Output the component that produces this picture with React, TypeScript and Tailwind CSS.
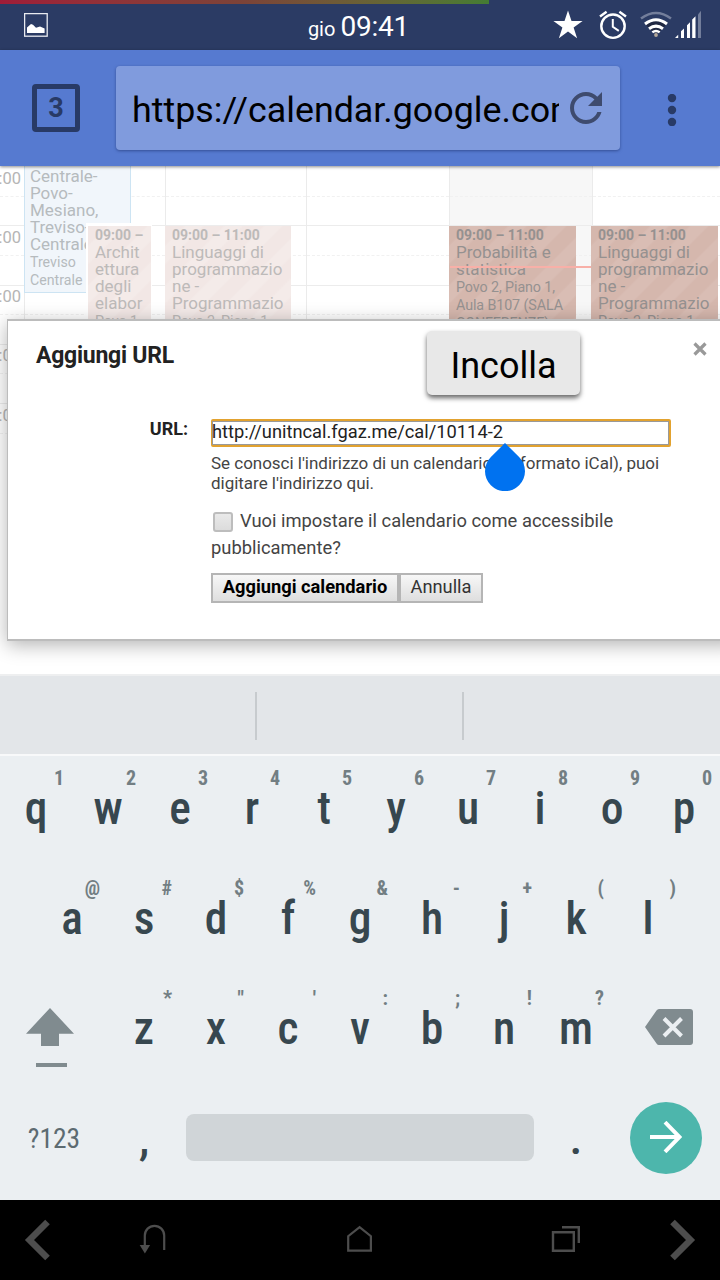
import type { ReactNode } from "react";

function StatusBar() {
  return (
    <header className="h-[50px] shrink-0 bg-[#2b3b64]">
      <div className="h-1 w-[489px] bg-linear-to-r from-[#a01c38] via-[#7c4338] to-[#447c33]" />
      <div className="grid h-[46px] grid-cols-[240px_1fr_240px] items-center text-white">
        <svg className="-mt-[4px] ml-6 h-6 w-6" viewBox="0 0 24 24">
          <rect x="0.6" y="0.6" width="22.6" height="22.6" fill="none" stroke="#e9ebf0" strokeWidth="1.3" />
          <path d="M3 20v-5.500l4-3.400 2 .6 3 3 4-1.3 4.6 2V20z" fill="#fff" />
        </svg>
        <div className="mt-[2px] flex items-baseline justify-center gap-[5px] pr-[3px] leading-8">
          <span className="text-[20px]">gio</span>
          <span className="text-[28px] tracking-[-0.2px]">09:41</span>
        </div>
        <svg className="h-[46px] w-60" viewBox="480 4 240 46">
          <path d="M568 10.5l3.5 10.6h11.1l-9 6.4 3.5 10.8-9.1-6.7-9.1 6.7 3.5-10.8-9-6.4h11.1z" fill="#fff" />
          <g fill="none" stroke="#fff">
            <circle cx="613" cy="26.2" r="11.7" strokeWidth="2.4" />
            <path d="M612.8 19v7.8l6 4" strokeWidth="2" />
            <path d="M600 16.5l6.6-4.8M626 16.5l-6.6-4.8" strokeWidth="2.4" />
          </g>
          <path d="M646 24.5q10-8 20 0l-3.5 4.5-6.5 5-6.5-5z" fill="#1b2032" opacity=".7" />
          <g fill="none" strokeWidth="2.5">
            <path d="M641 18.5q15-11 30 0" stroke="#737e9b" />
            <path d="M645 24q11-8.5 22 0" stroke="#fff" strokeWidth="3" />
            <path d="M649 28.8q7-5.3 14 0" stroke="#fff" strokeWidth="3" />
            <path d="M652.3 32.3q3.7-2.6 7.4 0" stroke="#fff" />
          </g>
          <circle cx="656" cy="35" r="1.9" fill="#b5a99b" />
          <path d="M675 38l3.2-3.3V38zM681 31.3l3-2.8V38h-3zM687 25.2l3-2.9V38h-3zM692.2 19.5l3.3-3.2V38h-3.3z" fill="#fff" />
          <path d="M698 14.5l3-3.8V38h-3z" fill="#737e9b" />
        </svg>
      </div>
    </header>
  );
}

function Toolbar() {
  return (
    <div className="relative z-10 flex h-[116px] shrink-0 items-center bg-[#567ad0] shadow-[0_1px_3px_rgba(0,0,0,0.45)]">
      <button className="ml-8 flex h-12 w-12 items-center justify-center rounded-[4px] border-[5px] border-[#283a66] text-[27px] font-bold text-[#283a66]">
        3
      </button>
      <div className="ml-9 flex h-[84px] w-[504px] items-center rounded-[4px] bg-[#809bdd] pl-4 shadow-[0_1px_3px_rgba(30,50,110,0.6)]">
        <div className="mt-[3px] w-[427px] overflow-hidden whitespace-nowrap text-[35.8px] leading-[46px] text-black">
          https://calendar.google.com
        </div>
        <svg className="ml-[11px] h-8 w-8 shrink-0" viewBox="4 4 16 16">
          <path d="M17.650 6.350C16.200 4.900 14.210 4 12 4c-4.420 0-7.990 3.580-7.990 8s3.570 8 7.990 8c3.730 0 6.840-2.550 7.730-6h-2.080c-.820 2.330-3.040 4-5.650 4-3.310 0-6-2.690-6-6s2.690-6 6-6c1.660 0 3.140.690 4.220 1.780L13 11h7V4l-2.350 2.350z" fill="#3e4b6e" />
        </svg>
      </div>
      <svg className="ml-[47px] mt-[3px] h-8 w-2.5" viewBox="0 0 10 32">
        <g fill="#283a66">
          <circle cx="5" cy="4" r="4.2" />
          <circle cx="5" cy="16" r="4.2" />
          <circle cx="5" cy="28" r="4.2" />
        </g>
      </svg>
    </div>
  );
}

type EventProps = { place: string; faded?: boolean; time: string; title: string; where: string };

function CalendarEvent({ place, faded, time, title, where }: EventProps) {
  const tone = faded
    ? "bg-[repeating-linear-gradient(135deg,#f2e7e5_0_13px,#f4ebe9_15px_26px,#f2e7e5_28px)] text-[#bdbab9]"
    : "bg-[repeating-linear-gradient(135deg,#d5b7ad_0_13px,#d9bdb4_15px_26px,#d5b7ad_28px)] text-[#959190]";
  return (
    <div className={`absolute top-[60px] h-[180px] overflow-hidden pl-[7px] pt-[1px] ${tone} ${place}`}>
      <div className="whitespace-nowrap text-[14px] font-bold leading-[17px] tracking-[-0.02px]">{time}</div>
      <div className="whitespace-pre text-[17px] leading-[17px]">{title}</div>
      <div className="whitespace-pre text-[14.3px] leading-[18px] tracking-[-0.1px]">{where}</div>
    </div>
  );
}

function HourCells() {
  return (
    <>
      {[0, 1, 2, 3, 4].map((n) => (
        <div key={n} className="h-[59.3px] border-b border-[#ececec]">
          <div className="h-[29.500px] border-b border-dashed border-[#f1f1f1]" />
        </div>
      ))}
    </>
  );
}

function DayColumn({ today, children }: { today?: boolean; children?: ReactNode }) {
  return (
    <div className={`relative border-l border-[#ebebeb] pt-px ${today ? "bg-[#f7f7f7]" : ""}`}>
      <HourCells />
      {children}
    </div>
  );
}

function Calendar() {
  return (
    <div className="grid h-full grid-cols-[24px_141px_141px_143px_143px_128px]">
      <div className="relative pt-px">
        <HourCells />
        <div className="absolute inset-0 flex flex-col items-end pr-[3px] pt-[1.5px] text-[16.5px] text-[#b5b5b5]">
          {["08:00", "09:00", "10:00", "11:00", "12:00"].map((t) => (
            <div key={t} className="h-[59.3px] leading-[21px]">{t}</div>
          ))}
        </div>
      </div>
      <DayColumn>
        <div className="absolute -left-px -top-1 h-[131px] w-[107px] whitespace-pre border border-[#cde4f3] bg-[#f1f6fb] pl-[5px] pt-[5px] text-[17px] leading-[17px] text-[#b6bbbe]">
          {"Centrale-\nPovo-\nMesiano,\nTreviso-\nCentrale"}
          <div className="text-[14.2px] leading-[18px]">{"Treviso\nCentrale"}</div>
        </div>
        <div className="absolute left-[61px] top-[57px] h-[190px] w-[66px] bg-white" />
        <CalendarEvent faded place="left-[63px] w-[63px]" time="09:00 –" title={"Archit\nettura\ndegli\nelabor"} where="Povo 1," />
      </DayColumn>
      <DayColumn>
        <CalendarEvent faded place="-left-px w-[126px]" time="09:00 – 11:00" title={"Linguaggi di\nprogrammazio\nne -\nProgrammazio"} where="Povo 2, Piano 1," />
      </DayColumn>
      <DayColumn />
      <DayColumn today>
        <CalendarEvent place="-left-px w-[127px]" time="09:00 – 11:00" title={"Probabilità e\nstatistica"} where={"Povo 2, Piano 1,\nAula B107 (SALA\nCONFERENZE),"} />
        <div className="absolute left-0 top-[100px] h-0.5 w-[142px] bg-[#f8b0a8]" />
      </DayColumn>
      <DayColumn>
        <CalendarEvent place="-left-[2px] w-[127px]" time="09:00 – 11:00" title={"Linguaggi di\nprogrammazio\nne -\nProgrammazio"} where="Povo 2, Piano 1," />
      </DayColumn>
    </div>
  );
}

function UrlDialog() {
  return (
    <section className="absolute left-[7px] top-[153px] h-[322px] w-[730px] border-2 border-l border-[#bcbcbc] bg-white pt-5 text-[#444] shadow-[0_4px_18px_rgba(0,0,0,0.3)]">
      <div className="flex items-start justify-between pl-7 pr-[28px]">
        <h1 className="pt-px text-[23px] font-bold leading-[28px] tracking-[-0.25px] text-[#222]">Aggiungi URL</h1>
        <svg className="mt-px h-3.5 w-3.5" viewBox="0 0 14 14">
          <path d="M1.500 1.500l11 11m0-11l-11 11" stroke="#999" strokeWidth="3.200" />
        </svg>
      </div>
      <div className="mt-[49px] flex">
        <label className="w-[180px] text-right text-[18px] font-bold leading-[20px] text-[#222]">URL:</label>
        <div className="ml-[23px] w-[462px]">
          <div className="h-7 w-[460px] rounded-[2px] border-2 border-[#e2a22f] bg-white">
            <div className="-ml-px h-6 border border-[#999] text-[18.3px] leading-[20px] text-[#222]">
              <span className="-ml-px">http://unitncal.fgaz.me/cal/10114-2</span>
            </div>
          </div>
          <p className="mt-[6px] whitespace-pre text-[17px] leading-[20px] tracking-[-0.02px]">{"Se conosci l'indirizzo di un calendario (in formato iCal), puoi\ndigitare l'indirizzo qui."}</p>
          <div className="mt-[14px] text-[18.35px] leading-[27px]">
            <div className="flex items-center">
              <span className="ml-[2px] mr-[7px] mt-[3px] h-5 w-5 rounded-[3px] border-2 border-[#bdbdbd] bg-linear-to-b from-[#e9e9e9] to-[#dcdcdc]" />
              <span className="whitespace-nowrap">Vuoi impostare il calendario come accessibile</span>
            </div>
            <div>pubblicamente?</div>
          </div>
          <div className="mt-[12px] flex text-[18.3px] leading-[24px]">
            <button className="h-[30px] w-[188px] whitespace-nowrap border-2 border-[#b5b5b5] bg-linear-to-b from-[#f7f7f7] to-[#dedede] pb-0.5 font-bold text-black">Aggiungi calendario</button>
            <button className="h-[30px] w-[84px] border-2 border-[#b5b5b5] bg-linear-to-b from-[#f7f7f7] to-[#dedede] pb-0.5 text-[#333]">Annulla</button>
          </div>
        </div>
      </div>
    </section>
  );
}

function Page() {
  return (
    <main className="relative h-[508px] shrink-0 overflow-hidden bg-white">
      <Calendar />
      <div className="absolute inset-x-0 bottom-0 h-[212px] bg-white" />
      <UrlDialog />
      <div className="absolute left-[427px] top-[165px] flex h-[64px] w-[153px] items-center justify-center rounded-[5px] bg-[#e8e8e8] pt-1.5 text-[36px] text-black shadow-[0_3px_5px_rgba(0,0,0,0.6)]">
        Incolla
      </div>
      <svg className="absolute left-[485px] top-[277px] h-12 w-10" viewBox="0 0 40 48">
        <path d="M20 0l14.100 14A20 20 0 1 1 5.900 14z" fill="#0072f0" />
      </svg>
    </main>
  );
}

function Key({ letter, hint }: { letter: string; hint?: string }) {
  return (
    <div className="h-[110px] w-[72px] pt-2.5">
      <div className="h-[25px] pr-2 text-right text-[20px] font-bold leading-6 text-[#727e83]">{hint}</div>
      <div className="text-center text-[45.5px] leading-[36px] font-[460] text-[#37474f]">{letter}</div>
    </div>
  );
}

function Keys({ letters, hints }: { letters: string; hints: string }) {
  return (
    <>
      {letters.split("").map((l, i) => (
        <Key key={l} letter={l} hint={hints[i]} />
      ))}
    </>
  );
}

function Keyboard() {
  return (
    <section className="h-[526px] shrink-0 bg-[#ebeff2] font-['Roboto_Condensed',Roboto,sans-serif] [font-stretch:75%]">
      <div className="flex h-[82px] items-center justify-center border-y-2 border-t-[#eeeff0] border-b-[#f8f9fa] bg-[#e3e6e9] pr-0.5">
        <div className="mt-0.5 h-12 w-0.5 bg-[#c7cbce]" />
        <div className="ml-[205px] mt-0.5 h-12 w-0.5 bg-[#c7cbce]" />
      </div>
      <div className="flex">
        <Keys letters="qwertyuiop" hints="1234567890" />
      </div>
      <div className="flex pl-9">
        <Keys letters="asdfghjkl" hints="@#$%&-+()" />
      </div>
      <div className="flex">
        <div className="w-[108px]">
          <svg className="ml-[26px] mt-[32px] h-[60px] w-12" viewBox="0 0 48 60">
            <path d="M24 0l24 25.700H33V38H15V25.700H0zM10 55h31v4H10z" fill="#808b8f" />
          </svg>
        </div>
        <Keys letters="zxcvbnm" hints={"*\"':;!?"} />
        <svg className="ml-[33px] mt-[33px] h-9 w-12" viewBox="0 0 48 36">
          <path d="M14 0h31a3 3 0 0 1 3 3v30a3 3 0 0 1-3 3H14q-1.500 0-2.500-1.500L0 18 11.500 1.500Q12.500 0 14 0z" fill="#808b8f" />
          <path d="M19 9.500l17.500 17.500m0-17.500L19 27" stroke="#ebeff2" strokeWidth="4" />
        </svg>
      </div>
      <div className="flex h-[114px] items-start">
        <div className="w-[108px] pt-[34px] text-center text-[27.5px] leading-[37px] text-[#5d6b71]">?123</div>
        <div className="w-[72px] pt-[34px] text-center text-[46px] font-medium leading-[37px] text-[#37474f]">,</div>
        <div className="ml-1.5 mt-[28px] h-[47px] w-[348px] rounded-lg bg-[#d0d5d8]" />
        <div className="ml-1.5 w-[72px] pt-[34px] text-center text-[46px] font-medium leading-[37px] text-[#37474f]">.</div>
        <div className="ml-[18px] mt-4 flex h-[72px] w-[72px] items-center justify-center rounded-full bg-[#4db6ac]">
          <svg className="-mt-0.5 h-8 w-8" viewBox="0 0 32 32">
            <path d="M0 16h29M15 1.200L29.500 16 15 30.800" fill="none" stroke="#fff" strokeWidth="4" />
          </svg>
        </div>
      </div>
    </section>
  );
}

function NavBar() {
  return (
    <nav className="h-20 shrink-0 bg-black">
      <svg className="h-20 w-[720px]" viewBox="0 0 720 80" fill="none" stroke="#4d4d4d">
        <path d="M47.500 22L29.500 40l18 18M672.500 22l18 18-18 18" strokeWidth="6.500" />
        <path d="M144.800 46V35.500a9.700 9.700 0 0 1 19.400 0V50" strokeWidth="2.200" />
        <path d="M139.700 45h10.400l-5.200 8.500z" fill="#4d4d4d" stroke="none" />
        <path d="M348.200 50.700V36.200l11.400-9 11.300 9v14.500z" strokeWidth="2.200" />
        <path d="M553 32.200h20.800v18.500H553zM562 27.200h16.800V43" strokeWidth="2.400" />
      </svg>
    </nav>
  );
}

export default function App() {
  return (
    <div className="flex h-[1280px] w-[720px] flex-col overflow-hidden bg-white font-[Roboto,sans-serif]">
      <StatusBar />
      <Toolbar />
      <Page />
      <Keyboard />
      <NavBar />
    </div>
  );
}
